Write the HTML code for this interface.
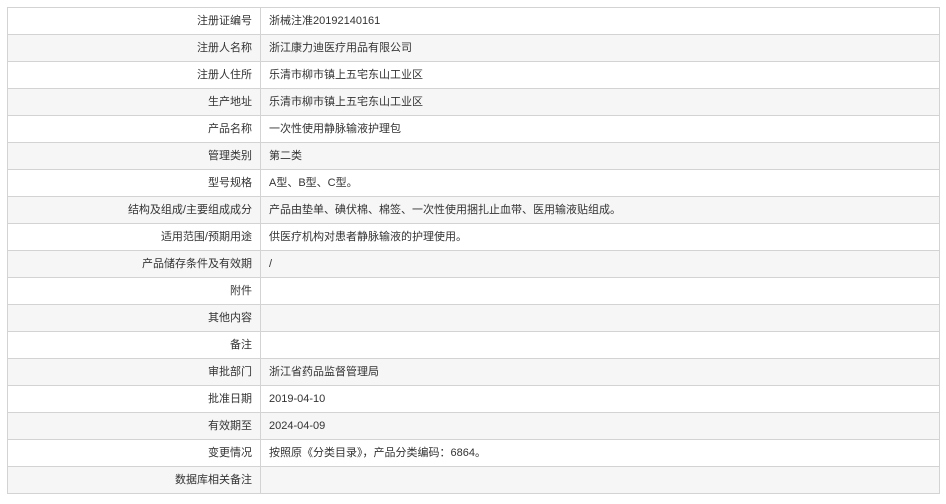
<!DOCTYPE html><html><head><meta charset="utf-8"><style>
body{margin:0;background:#fff;font-family:"Liberation Sans","Noto Sans CJK SC",sans-serif;font-size:11px;color:#333}
table{position:absolute;left:7px;top:7px;width:933px;border-collapse:collapse}
td{border:1px solid #d3d3d3;height:26px;padding:0 8px;line-height:26px;white-space:nowrap}
td.l{width:236px;text-align:right}
tr:nth-child(even) td{background:#f6f6f6}
</style></head><body><table>
<tr><td class="l">注册证编号</td><td>浙械注准20192140161</td></tr>
<tr><td class="l">注册人名称</td><td>浙江康力迪医疗用品有限公司</td></tr>
<tr><td class="l">注册人住所</td><td>乐清市柳市镇上五宅东山工业区</td></tr>
<tr><td class="l">生产地址</td><td>乐清市柳市镇上五宅东山工业区</td></tr>
<tr><td class="l">产品名称</td><td>一次性使用静脉输液护理包</td></tr>
<tr><td class="l">管理类别</td><td>第二类</td></tr>
<tr><td class="l">型号规格</td><td>A型、B型、C型。</td></tr>
<tr><td class="l">结构及组成/主要组成成分</td><td>产品由垫单、碘伏棉、棉签、一次性使用捆扎止血带、医用输液贴组成。</td></tr>
<tr><td class="l">适用范围/预期用途</td><td>供医疗机构对患者静脉输液的护理使用。</td></tr>
<tr><td class="l">产品储存条件及有效期</td><td>/</td></tr>
<tr><td class="l">附件</td><td></td></tr>
<tr><td class="l">其他内容</td><td></td></tr>
<tr><td class="l">备注</td><td></td></tr>
<tr><td class="l">审批部门</td><td>浙江省药品监督管理局</td></tr>
<tr><td class="l">批准日期</td><td>2019-04-10</td></tr>
<tr><td class="l">有效期至</td><td>2024-04-09</td></tr>
<tr><td class="l">变更情况</td><td>按照原《分类目录》，产品分类编码：6864。</td></tr>
<tr><td class="l">数据库相关备注</td><td></td></tr>
</table></body></html>
